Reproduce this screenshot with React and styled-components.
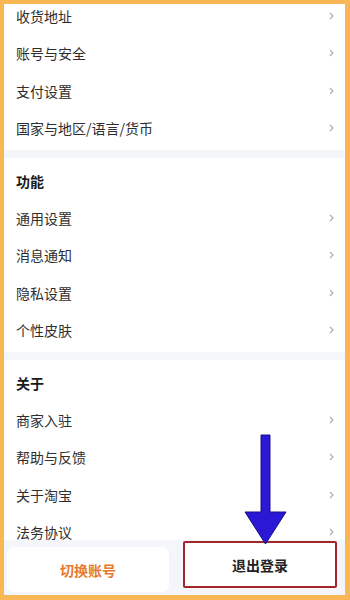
import React from "react";
import styled, { createGlobalStyle } from "styled-components";

const Global = createGlobalStyle`
  html, body { margin: 0; padding: 0; }
  body { font-family: "Noto Sans CJK SC", "Noto Sans", sans-serif; }
`;

const Frame = styled.div`
  position: relative;
  width: 350px;
  height: 600px;
  box-sizing: border-box;
  border-style: solid;
  border-color: #f9b654;
  border-width: 4px 5px 5px 4px;
  background: #f4f6f9;
  overflow: hidden;
  display: flex;
  flex-direction: column;
`;

const Scroll = styled.div`
  flex: 1;
  overflow: hidden;
  display: flex;
  flex-direction: column;
  gap: 8px;
  margin-top: -7px;
`;

const Section = styled.div`
  background: #fff;
  padding-bottom: 3px;
  display: flex;
  flex-direction: column;
`;

const Header = styled.div`
  height: 41px;
  box-sizing: border-box;
  padding: 14px 12px 0 12px;
  font-size: 14px;
  line-height: 18px;
  font-weight: 700;
  color: #1a1a1a;
`;

const Row = styled.div`
  height: 37.5px;
  display: flex;
  align-items: center;
  justify-content: space-between;
  padding: 0 11px 0 12px;
  font-size: 14px;
  color: #2e2e2e;
`;

const Chevron = () => (
  <svg width="5" height="8" viewBox="0 0 5 8">
    <polyline points="1,1 4,4 1,7" fill="none" stroke="#aaa" strokeWidth="1.1" />
  </svg>
);

const Bar = styled.div`
  height: 55px;
  flex-shrink: 0;
  background: #f4f6f9;
  display: flex;
  align-items: flex-start;
  gap: 14px;
  padding: 1px 8px 0 3px;
  box-sizing: border-box;
`;

const Button = styled.div`
  height: ${(p) => p.$h}px;
  margin-top: ${(p) => p.$top}px;
  flex: ${(p) => p.$grow};
  box-sizing: border-box;
  background: #fff;
  border-radius: ${(p) => (p.$marked ? "2px" : "7px")};
  border: ${(p) => (p.$marked ? "2px solid #a3262b" : "none")};
  display: flex;
  align-items: center;
  justify-content: center;
  font-size: 14px;
  font-weight: 700;
  color: ${(p) => p.$color};
`;

const Arrow = styled.svg`
  position: absolute;
  left: 237px;
  top: 430px;
`;

const sections = [
  { title: null, items: ["收货地址", "账号与安全", "支付设置", "国家与地区/语言/货币"] },
  { title: "功能", items: ["通用设置", "消息通知", "隐私设置", "个性皮肤"] },
  { title: "关于", items: ["商家入驻", "帮助与反馈", "关于淘宝", "法务协议"] },
];

export default function App() {
  return (
    <>
      <Global />
      <Frame>
        <Scroll>
          {sections.map((s, i) => (
            <Section key={i}>
              {s.title && <Header>{s.title}</Header>}
              {s.items.map((t) => (
                <Row key={t}>
                  <span>{t}</span>
                  <Chevron />
                </Row>
              ))}
            </Section>
          ))}
        </Scroll>
        <Bar>
          <Button $h={45} $top={6} $grow="164" $color="#e8792d">切换账号</Button>
          <Button $h={47} $top={0} $grow="152" $color="#222" $marked>退出登录</Button>
        </Bar>
        <Arrow width="50" height="112" viewBox="0 0 50 112">
          <polygon
            points="20,1 29,1 29,78 45,78 24.5,110 4,78 20,78"
            fill="#2b17d6"
            stroke="#1a1080"
            strokeWidth="1"
          />
        </Arrow>
      </Frame>
    </>
  );
}
